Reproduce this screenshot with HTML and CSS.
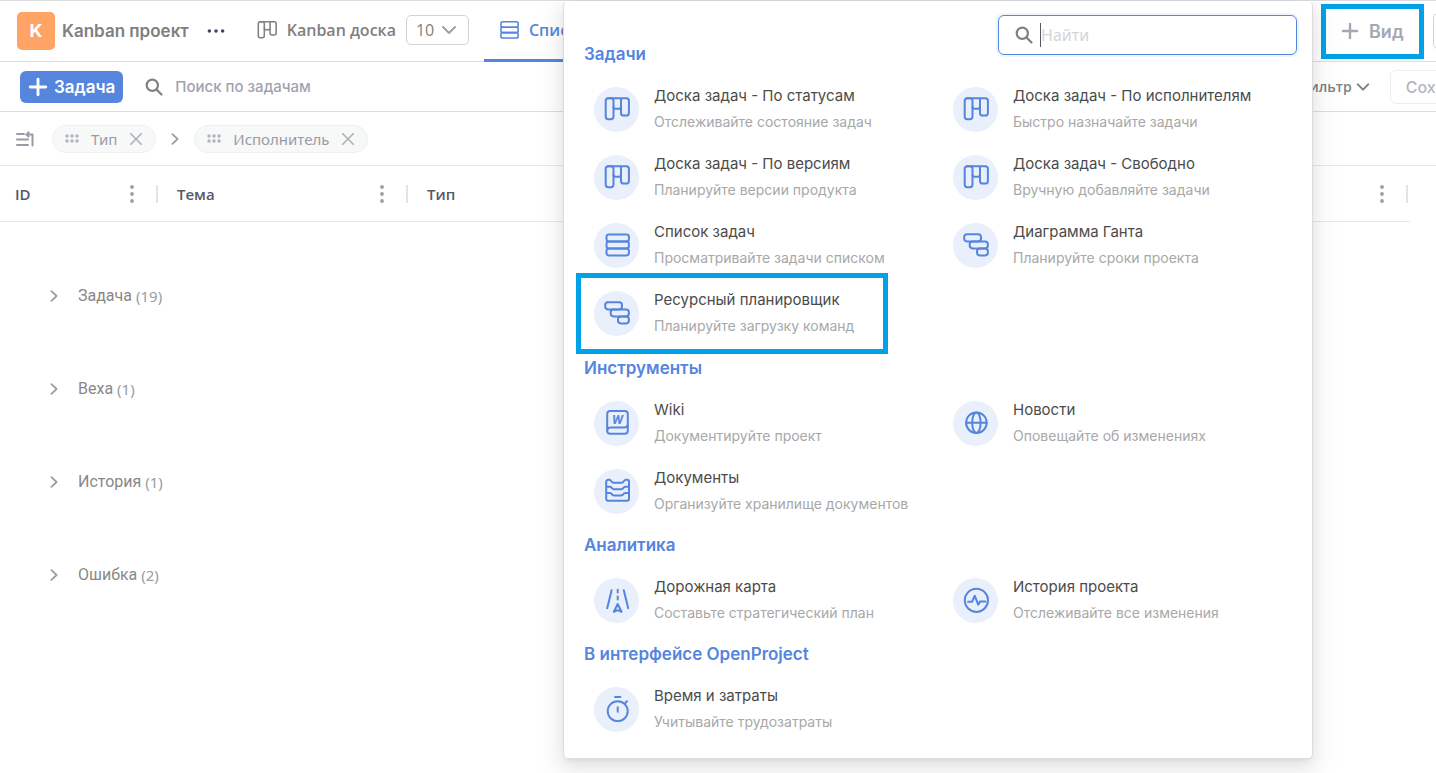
FILE: index.html
```html
<!DOCTYPE html>
<html lang="ru">
<head>
<meta charset="utf-8">
<title>Kanban проект</title>
<link rel="stylesheet" href="styles.css">
</head>
<body>
<svg class="sprite" aria-hidden="true">
  <symbol id="board" viewBox="0 0 26 26"><rect x="1.7" y="2.2" width="7.8" height="21" rx="2.6"/><path d="M4 2.2H22.3A2.6 2.6 0 0 1 24.9 4.8V16.9A2.6 2.6 0 0 1 22.3 19.5H19.6A2.6 2.6 0 0 1 17 16.9V2.2M9.5 10.7A2 2 0 0 0 11.5 12.7H15A2 2 0 0 0 17 10.7"/></symbol>
  <symbol id="list" viewBox="0 0 26 26"><rect x="2.5" y="2.4" width="22.4" height="7" rx="2.4"/><rect x="2.5" y="9.4" width="22.4" height="7" rx="2.4"/><rect x="2.5" y="16.4" width="22.4" height="7" rx="2.4"/></symbol>
  <symbol id="gantt" viewBox="0 0 26 26"><rect x="1.2" y="2.2" width="16.8" height="7.2" rx="2.8"/><rect x="6.7" y="9.4" width="18.2" height="7" rx="2.8"/><rect x="14" y="16.4" width="10.9" height="7" rx="2.8"/></symbol>
  <symbol id="globe" viewBox="0 0 26 26"><circle cx="13.4" cy="12.7" r="10.3"/><ellipse cx="13.4" cy="12.7" rx="4.2" ry="10.3"/><path d="M3.1 12.7H23.7"/></symbol>
  <symbol id="wiki" viewBox="0 0 26 26"><rect x="3.2" y="1" width="20.6" height="22.8" rx="3"/><path d="M3.2 20.5C3.2 18.3 4.6 17.4 7 17.4H20C22.3 17.4 23.8 17.2 23.8 15"/><text x="8" y="14" class="icon-letter">W</text></symbol>
  <symbol id="docs" viewBox="0 0 26 26"><path d="M2.2 20.8V3.8A2 2 0 0 1 4.2 1.8H5.2C7.6 1.8 7 4.8 9.5 4.8H17.5C20 4.8 19.6 1.8 22 1.8H23A2 2 0 0 1 25 3.8V20.8A2 2 0 0 1 23 22.8H4.2A2 2 0 0 1 2.2 20.8ZM2.2 8.7H6C8 8.7 7.6 11.2 9.8 11.2H17.4C19.6 11.2 19.2 8.7 21.2 8.7H25M2.2 14.9H6C8 14.9 7.6 17.4 9.8 17.4H17.4C19.6 17.4 19.2 14.9 21.2 14.9H25"/></symbol>
  <symbol id="road" viewBox="0 0 26 26"><path d="M7.6 3.2L3.2 21.2M19.8 3.2L24.2 21.2M13.7 2.8V5.4M13.7 9.4V12.4M13.7 17L9.9 24.8L13.7 23.2L17.5 24.8Z"/></symbol>
  <symbol id="pulse" viewBox="0 0 26 26"><circle cx="13.4" cy="13.3" r="11.6"/><path d="M5 14.7H9.2L11.7 8.7L15.2 17.6L17.2 14.4H22.4"/></symbol>
  <symbol id="timer" viewBox="0 0 26 26"><circle cx="13.7" cy="15.2" r="10"/><path d="M11 1H16.4M20.6 7.8L23 5.2M13.7 11.2V15.8"/></symbol>
  <symbol id="search" viewBox="0 0 18 18"><circle cx="7.3" cy="7.3" r="5.6"/><path d="M11.5 11.5L16.5 16.5"/></symbol>
  <symbol id="plus" viewBox="0 0 18 18"><path d="M9 2V16M2 9H16"/></symbol>
  <symbol id="down" viewBox="0 0 16 16"><path d="M2 5L8 11L14 5"/></symbol>
  <symbol id="right" viewBox="0 0 16 16"><path d="M5 2.5L11 8L5 13.5"/></symbol>
  <symbol id="cross" viewBox="0 0 16 16"><path d="M2 2L14 14M14 2L2 14"/></symbol>
  <symbol id="grip" viewBox="0 0 14 10"><g class="dots"><circle cx="2" cy="2" r="1.7"/><circle cx="7" cy="2" r="1.7"/><circle cx="12" cy="2" r="1.7"/><circle cx="2" cy="7" r="1.7"/><circle cx="7" cy="7" r="1.7"/><circle cx="12" cy="7" r="1.7"/></g></symbol>
  <symbol id="kebab" viewBox="0 0 4 18"><g class="dots"><circle cx="2" cy="2" r="1.9"/><circle cx="2" cy="9" r="1.9"/><circle cx="2" cy="16" r="1.9"/></g></symbol>
  <symbol id="more" viewBox="0 0 18 4"><g class="dots"><circle cx="2.4" cy="2" r="1.8"/><circle cx="9" cy="2" r="1.8"/><circle cx="15.6" cy="2" r="1.8"/></g></symbol>
  <symbol id="levels" viewBox="0 0 18 16"><path d="M1 3H8M1 8.5H12M1 14H12M16.5 14.5V3.5H11M12.6 1.4L10.4 3.5L12.6 5.6"/></symbol>
</svg>

<header class="topbar">
  <span class="logo">K</span>
  <h1 class="project">Kanban проект</h1>
  <button class="plain more" aria-label="Меню проекта"><svg width="18" height="4"><use href="#more"/></svg></button>
  <nav class="tabs">
    <div class="tab">
      <a href="#board-view" class="tab-link"><svg width="20" height="20"><use href="#board"/></svg>Kanban доска</a>
      <span class="count"><select aria-label="Количество"><option>10</option><option>20</option></select><svg width="16" height="16"><use href="#down"/></svg></span>
    </div>
    <div class="tab active">
      <a href="#list-view" class="tab-link"><svg width="20" height="20"><use href="#list"/></svg>Список задач</a>
    </div>
  </nav>
  <div class="top-actions">
    <button class="add-view"><svg width="18" height="18"><use href="#plus"/></svg>Вид</button>
    <button class="edge-button" aria-label="Ещё"></button>
  </div>
</header>

<div class="toolbar">
  <button class="create"><svg width="20" height="20"><use href="#plus"/></svg>Задача</button>
  <label class="task-search"><svg width="18" height="18"><use href="#search"/></svg><input type="search" placeholder="Поиск по задачам" aria-label="Поиск по задачам"></label>
  <button class="plain filter">Фильтр<svg width="14" height="14"><use href="#down"/></svg></button>
  <button class="save">Сохранить</button>
</div>

<div class="grouping">
  <svg class="levels" width="18" height="16"><use href="#levels"/></svg>
  <span class="chip"><svg width="14" height="10"><use href="#grip"/></svg>Тип<button class="plain" aria-label="Убрать Тип"><svg width="14" height="14"><use href="#cross"/></svg></button></span>
  <svg class="then" width="14" height="14"><use href="#right"/></svg>
  <span class="chip"><svg width="14" height="10"><use href="#grip"/></svg>Исполнитель<button class="plain" aria-label="Убрать Исполнитель"><svg width="14" height="14"><use href="#cross"/></svg></button></span>
</div>

<div class="grid-wrap">
<table class="tasks">
  <colgroup><col class="col-id"><col class="col-subject"><col></colgroup>
  <thead>
    <tr>
      <th scope="col"><div class="cell">ID<button class="plain" aria-label="Меню столбца ID"><svg width="4" height="18"><use href="#kebab"/></svg></button></div></th>
      <th scope="col"><div class="cell">Тема<button class="plain" aria-label="Меню столбца Тема"><svg width="4" height="18"><use href="#kebab"/></svg></button></div></th>
      <th scope="col"><div class="cell">Тип<button class="plain" aria-label="Меню столбца Тип"><svg width="4" height="18"><use href="#kebab"/></svg></button></div></th>
    </tr>
  </thead>
  <tbody>
    <tr><td colspan="3"><button class="plain group"><svg width="14" height="14"><use href="#right"/></svg><span class="name">Задача</span><span class="total">(19)</span></button></td></tr>
    <tr><td colspan="3"><button class="plain group"><svg width="14" height="14"><use href="#right"/></svg><span class="name">Веха</span><span class="total">(1)</span></button></td></tr>
    <tr><td colspan="3"><button class="plain group"><svg width="14" height="14"><use href="#right"/></svg><span class="name">История</span><span class="total">(1)</span></button></td></tr>
    <tr><td colspan="3"><button class="plain group"><svg width="14" height="14"><use href="#right"/></svg><span class="name">Ошибка</span><span class="total">(2)</span></button></td></tr>
  </tbody>
</table>
</div>

<div class="menu">
  <section>
    <div class="menu-head">
      <h2>Задачи</h2>
      <label class="menu-search"><svg width="18" height="18"><use href="#search"/></svg><input type="text" placeholder="Найти" aria-label="Найти"></label>
    </div>
    <div class="items">
      <a class="item" href="#status"><span class="badge"><svg><use href="#board"/></svg></span><span class="text"><b>Доска задач - По статусам</b><small>Отслеживайте состояние задач</small></span></a>
      <a class="item" href="#assignee"><span class="badge"><svg><use href="#board"/></svg></span><span class="text"><b>Доска задач - По исполнителям</b><small>Быстро назначайте задачи</small></span></a>
      <a class="item" href="#version"><span class="badge"><svg><use href="#board"/></svg></span><span class="text"><b>Доска задач - По версиям</b><small>Планируйте версии продукта</small></span></a>
      <a class="item" href="#free"><span class="badge"><svg><use href="#board"/></svg></span><span class="text"><b>Доска задач - Свободно</b><small>Вручную добавляйте задачи</small></span></a>
      <a class="item" href="#tasks"><span class="badge"><svg><use href="#list"/></svg></span><span class="text"><b>Список задач</b><small>Просматривайте задачи списком</small></span></a>
      <a class="item" href="#gantt-view"><span class="badge"><svg><use href="#gantt"/></svg></span><span class="text"><b>Диаграмма Ганта</b><small>Планируйте сроки проекта</small></span></a>
      <a class="item marked" href="#resources"><span class="badge"><svg><use href="#gantt"/></svg></span><span class="text"><b>Ресурсный планировщик</b><small>Планируйте загрузку команд</small></span></a>
    </div>
  </section>
  <section>
    <h2>Инструменты</h2>
    <div class="items">
      <a class="item" href="#wiki-view"><span class="badge"><svg><use href="#wiki"/></svg></span><span class="text"><b>Wiki</b><small>Документируйте проект</small></span></a>
      <a class="item" href="#news"><span class="badge"><svg><use href="#globe"/></svg></span><span class="text"><b>Новости</b><small>Оповещайте об изменениях</small></span></a>
      <a class="item" href="#documents"><span class="badge"><svg><use href="#docs"/></svg></span><span class="text"><b>Документы</b><small>Организуйте хранилище документов</small></span></a>
    </div>
  </section>
  <section>
    <h2>Аналитика</h2>
    <div class="items">
      <a class="item" href="#roadmap"><span class="badge"><svg><use href="#road"/></svg></span><span class="text"><b>Дорожная карта</b><small>Составьте стратегический план</small></span></a>
      <a class="item" href="#history"><span class="badge"><svg><use href="#pulse"/></svg></span><span class="text"><b>История проекта</b><small>Отслеживайте все изменения</small></span></a>
    </div>
  </section>
  <section>
    <h2>В интерфейсе OpenProject</h2>
    <div class="items">
      <a class="item" href="#time"><span class="badge"><svg><use href="#timer"/></svg></span><span class="text"><b>Время и затраты</b><small>Учитывайте трудозатраты</small></span></a>
    </div>
  </section>
</div>
</body>
</html>
```

FILE: styles.css
```css
* { box-sizing: border-box; }

:root {
  --blue: #5585dd;
  --mark: #00a2e8;
  --line: #dcdde1;
  --grey: #80807f;
}

body {
  position: relative;
  margin: 0;
  min-height: 100vh;
  overflow: hidden;
  background: #fff;
  font-family: Inter, "Liberation Sans", sans-serif;
  color: var(--grey);
}

a { color: inherit; text-decoration: none; }
button, input, select { font: inherit; color: inherit; }

svg {
  flex: none;
  fill: none;
  stroke: currentColor;
  stroke-width: 2;
  stroke-linecap: round;
  stroke-linejoin: round;
}

.sprite { display: none; }
.dots { fill: currentColor; stroke: none; }

.icon-letter {
  fill: currentColor;
  stroke: none;
  font: italic 700 13px Roboto, sans-serif;
}

.plain {
  display: flex;
  align-items: center;
  padding: 0;
  border: 0;
  background: none;
}

/* Project bar */

.topbar {
  display: flex;
  align-items: center;
  height: 62px;
  padding-left: 17px;
  border-top: 1px solid var(--line);
  border-bottom: 1px solid var(--line);
}

.logo {
  width: 38px;
  height: 38px;
  border-radius: 5px;
  background: #ffa465;
  color: #fff;
  font-size: 18px;
  font-weight: 700;
  line-height: 38px;
  text-align: center;
}

.project {
  margin: 0 18px 0 7px;
  font-size: 17px;
  font-weight: 600;
}

.more { color: #3f4760; }

.tabs {
  display: flex;
  align-self: stretch;
  margin: 0 0 -1px 17px;
  font-family: "Open Sans", "Noto Sans", sans-serif;
  font-size: 16px;
  font-weight: 600;
}

.tab {
  display: flex;
  align-items: center;
  gap: 10px;
  padding: 0 15px;
  border-bottom: 3px solid transparent;
  white-space: nowrap;
}

.tab-link { display: flex; align-items: center; gap: 10px; }
.tab.active { border-color: var(--blue); color: var(--blue); }

.count {
  display: flex;
  align-items: center;
  width: 63px;
  height: 30px;
  padding-right: 11px;
  border: 1px solid #d3d3d3;
  border-radius: 5px;
  font-weight: 400;
}

.count svg { color: #a0a0a0; }

.count select {
  flex: 1;
  min-width: 0;
  padding: 0 0 0 9px;
  border: 0;
  background: none;
  appearance: none;
}

.top-actions {
  display: flex;
  align-items: center;
  gap: 9px;
  margin-left: auto;
}

.add-view {
  display: flex;
  align-items: center;
  gap: 10px;
  width: 103px;
  height: 55px;
  padding: 0 15px;
  border: 5px solid var(--mark);
  background: none;
  color: #a4a8b5;
  font-size: 18px;
  font-weight: 600;
}

.add-view svg { stroke-width: 2.4; }

.edge-button {
  width: 36px;
  height: 36px;
  margin-right: -33px;
  border: 1px solid #d3d3d3;
  border-radius: 5px;
  background: #fff;
}

/* Task toolbar */

.toolbar {
  display: flex;
  align-items: center;
  height: 50px;
  padding-left: 20px;
  border-bottom: 1px solid var(--line);
}

.create {
  display: flex;
  align-items: center;
  gap: 6px;
  height: 32px;
  padding: 0 8px;
  border: 0;
  border-radius: 6px;
  background: var(--blue);
  color: #fff;
  font-size: 17px;
  font-weight: 600;
}

.create svg { stroke-width: 2.6; }

.task-search {
  display: flex;
  align-items: center;
  gap: 12px;
  margin-left: 22px;
  font-size: 15px;
  font-weight: 500;
}

.task-search svg { stroke-width: 2.2; }
.task-search input { width: 200px; padding: 0; border: 0; outline: 0; }
.task-search input::placeholder { color: #a0a3ad; }

.filter {
  gap: 4px;
  margin-left: auto;
  font-family: "Open Sans", "Noto Sans", sans-serif;
  font-size: 14px;
  font-weight: 600;
}

.filter svg { stroke-width: 2.4; }

.save {
  height: 34px;
  margin: 0 -71px 0 20px;
  padding: 0 15px;
  border: 1px solid #ededf1;
  border-radius: 6px;
  background: none;
  color: #b5b6ba;
  font-size: 16px;
  font-weight: 500;
}

/* Grouping chips */

.grouping {
  display: flex;
  align-items: center;
  height: 54px;
  padding-left: 16px;
  border-bottom: 1px solid #e6e7ea;
  font-family: "Noto Sans", sans-serif;
  font-size: 15px;
  color: #989ca6;
}

.levels { margin-right: 18px; }

.chip {
  display: flex;
  align-items: center;
  gap: 12px;
  height: 28px;
  padding: 0 12px;
  border: 1px solid #eeefef;
  border-radius: 14px;
  background: #f7f8f8;
}

.chip svg { color: #b0b3bc; }
.then { margin: 0 12px; }

/* Task table */

.grid-wrap { padding-right: 26px; }

.tasks {
  width: 100%;
  table-layout: fixed;
  border-collapse: collapse;
}

.col-id { width: 158px; }
.col-subject { width: 250px; }

.tasks th {
  height: 55px;
  padding: 1px 0 0 19px;
  border-bottom: 1px solid #e6e7ea;
  color: #555966;
  font-family: "Open Sans", "Noto Sans", sans-serif;
  font-size: 15px;
  font-weight: 600;
  text-align: left;
}

.tasks th:first-child { padding-left: 15px; }
.tasks th:last-child { padding-right: 2px; }

.cell {
  display: flex;
  align-items: center;
  justify-content: space-between;
  height: 18px;
  padding-right: 22px;
  border-right: 2px solid #e3e4e8;
}

.cell .plain { color: #9c9fa6; }

.tasks td {
  height: 93px;
  padding: 0 0 8px 47px;
  vertical-align: bottom;
}

.group { line-height: 20px; color: #9a9ca2; }

.name {
  margin: 0 4px 0 17px;
  color: #8a8886;
  font-family: Roboto, sans-serif;
  font-size: 16px;
}

.total {
  font-family: "Noto Sans", sans-serif;
  font-size: 15px;
}

/* View menu */

.menu {
  position: absolute;
  top: 1px;
  right: 123px;
  width: 750px;
  padding: 0 10px 15px 20px;
  border: 1px solid #dcdcdc;
  border-top-color: #fff;
  border-radius: 5px;
  background: #fff;
  box-shadow: 0 6px 16px rgba(0, 0, 0, .08), 0 3px 6px -4px rgba(0, 0, 0, .12), 0 9px 28px 8px rgba(0, 0, 0, .05);
}

.menu h2 {
  margin: 0;
  color: var(--blue);
  font-size: 17px;
  font-weight: 600;
  line-height: 41px;
}

.menu-head {
  display: flex;
  align-items: flex-end;
  justify-content: space-between;
  height: 73px;
}

.menu-head + .items { margin-bottom: 1px; }

.menu-search {
  display: flex;
  align-items: center;
  align-self: flex-start;
  gap: 7px;
  width: 299px;
  height: 40px;
  margin: 13px 5px 0 0;
  padding: 0 16px;
  border: 1px solid var(--blue);
  border-radius: 6px;
  box-shadow: 0 0 0 2px #edf5ff;
}

.menu-search svg { stroke-width: 2.2; }

.menu-search input {
  flex: 1;
  min-width: 0;
  height: 24px;
  padding: 0;
  border: 0;
  border-left: 1px solid #555966;
  outline: 0;
  font-family: "Noto Sans", sans-serif;
  font-size: 16px;
}

.menu-search input::placeholder { color: #d4d5d8; }

.items {
  display: grid;
  grid-template-columns: 1fr 1fr;
}

.item {
  position: relative;
  display: flex;
  align-items: center;
  gap: 15px;
  height: 68px;
  padding-left: 10px;
}

.badge {
  display: grid;
  place-items: center;
  width: 45px;
  height: 45px;
  border-radius: 50%;
  background: #e9effb;
  color: var(--blue);
}

.badge svg { width: 26px; height: 26px; }

.text { display: flex; flex-direction: column; gap: 4px; }

.text b {
  color: #4b4b4b;
  font-size: 15px;
  font-weight: 400;
  line-height: 22px;
}

.text small {
  color: #a8a8a8;
  font-size: 14px;
  line-height: 22px;
}

.marked::after {
  content: "";
  position: absolute;
  inset: -6px 55px -7px -8px;
  border: 5px solid var(--mark);
}
```
